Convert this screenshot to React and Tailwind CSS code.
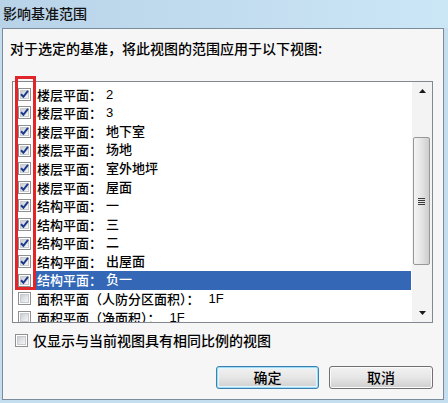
import React from "react";

const rows = [
  { type: "楼层平面", name: "2", checked: true },
  { type: "楼层平面", name: "3", checked: true },
  { type: "楼层平面", name: "地下室", checked: true },
  { type: "楼层平面", name: "场地", checked: true },
  { type: "楼层平面", name: "室外地坪", checked: true },
  { type: "楼层平面", name: "屋面", checked: true },
  { type: "结构平面", name: "一", checked: true },
  { type: "结构平面", name: "三", checked: true },
  { type: "结构平面", name: "二", checked: true },
  { type: "结构平面", name: "出屋面", checked: true },
  { type: "结构平面", name: "负一", checked: true, selected: true },
  { type: "面积平面（人防分区面积）", name: "1F", checked: false, wide: true },
  { type: "面积平面（净面积）", name: "1F", checked: false, wide: true },
];

function CheckBox({ checked }) {
  return (
    <span className="w-[13px] h-[13px] shrink-0 border border-[#8e8f8f] bg-white flex items-center justify-center">
      <span className="w-[9px] h-[9px] border border-[#c7cbd0] bg-gradient-to-br from-[#cbcfd5] to-[#f6f6f6] flex items-center justify-center">
        {checked && (
          <svg width="9" height="9" viewBox="0 0 9 9" className="overflow-visible">
            <path d="M1 4.2 L3.4 6.8 L8 0.8" fill="none" stroke="#1e3a8c" strokeWidth="2" />
          </svg>
        )}
      </span>
    </span>
  );
}

function Row({ row }) {
  return (
    <div className="h-[18.6px] flex items-center pl-[5px] shrink-0">
      <CheckBox checked={row.checked} />
      <div
        className={
          "flex-1 h-full mr-[1px] ml-[5px] pl-[1px] flex items-center whitespace-nowrap text-[13px] font-medium " +
          (row.selected ? "bg-[#3468b7] text-white" : "text-black")
        }
      >
        <span>{row.type}：</span>
        <span className={(row.wide ? "ml-[9px] " : "ml-[4px] ") + "font-['Liberation_Sans','Noto_Sans_CJK_SC',sans-serif]"}>
          {row.name}
        </span>
      </div>
    </div>
  );
}

function Arrow({ up }) {
  return (
    <svg width="7" height="4" viewBox="0 0 7 4">
      <path d={up ? "M0 4 L3.5 0 L7 4 Z" : "M0 0 L7 0 L3.5 4 Z"} fill="#1a1a1a" />
    </svg>
  );
}

function Button({ children, primary }) {
  return (
    <div
      className={
        "h-[23px] rounded-[3px] border flex items-center justify-center text-[14px] font-medium text-black bg-gradient-to-b from-[#f2f2f2] via-[#e6e6e6] to-[#cfcfcf] " +
        (primary
          ? "w-[103px] border-[#3c7fb1] shadow-[inset_0_0_0_1px_#9edcf6,inset_0_0_0_2px_#e4f5fc]"
          : "w-[104px] border-[#707070] shadow-[inset_0_0_0_1px_#fbfbfb]")
      }
    >
      {children}
    </div>
  );
}

export default function App() {
  return (
    <div className="w-[448px] h-[403px] bg-[#c4deef] flex flex-col font-['Noto_Sans_CJK_SC','Liberation_Sans',sans-serif] overflow-hidden">
      {/* title bar */}
      <div className="h-[28px] shrink-0 flex items-center pl-[3px] pb-[2px] bg-gradient-to-r from-[#b8d2e8] via-[#c2dcef] to-[#cbe7f6] text-[14px] font-medium text-[#111]">
        影响基准范围
      </div>

      {/* client area */}
      <div className="ml-[2px] w-[442px] h-[372px] border border-[#7d8c9b] bg-[#f6f6f6] flex flex-col">
        <div className="mt-[9px] pl-[7px] h-[20px] leading-[20px] text-[14px] font-medium text-black whitespace-nowrap">
          对于选定的基准，将此视图的范围应用于以下视图:
        </div>

        <div className="relative ml-[9px] mt-[23px] w-[421px] h-[242px] border border-[#828790] bg-white flex">
          <div className="flex-1 flex flex-col pt-[3px] overflow-hidden">
            {rows.map((r, i) => (
              <Row key={i} row={r} />
            ))}
          </div>

          {/* scrollbar */}
          <div className="w-[20px] h-full bg-[#f3f3f3] flex flex-col">
            <div className="h-[18px] flex items-center justify-center">
              <Arrow up />
            </div>
            <div className="flex-1 relative">
              <div className="absolute left-[1px] right-[2px] top-[37px] h-[128px] rounded-[2px] border border-[#979797] bg-gradient-to-r from-[#f4f4f4] via-[#e4e4e4] to-[#cdcdcd] flex flex-col items-center justify-center gap-[1px]">
                <div className="w-[7px] h-[1px] bg-[#3a3a3a]" />
                <div className="w-[7px] h-[1px] bg-[#3a3a3a]" />
                <div className="w-[7px] h-[1px] bg-[#3a3a3a]" />
                <div className="w-[7px] h-[1px] bg-[#3a3a3a]" />
              </div>
            </div>
            <div className="h-[18px] flex items-center justify-center">
              <Arrow />
            </div>
          </div>

          {/* red annotation frame */}
          <div className="absolute left-[2px] top-[-6px] w-[21px] h-[214px] border-[3px] border-[#e0262b]" />
        </div>

        <div className="mt-[10px] ml-[12px] h-[14px] flex items-center gap-[5px]">
          <CheckBox checked={false} />
          <span className="text-[14px] font-medium text-black whitespace-nowrap leading-[14px]">仅显示与当前视图具有相同比例的视图</span>
        </div>

        <div className="mt-[19px] flex justify-end gap-[10px] pr-[10px]">
          <Button primary>确定</Button>
          <Button>取消</Button>
        </div>
      </div>
    </div>
  );
}
